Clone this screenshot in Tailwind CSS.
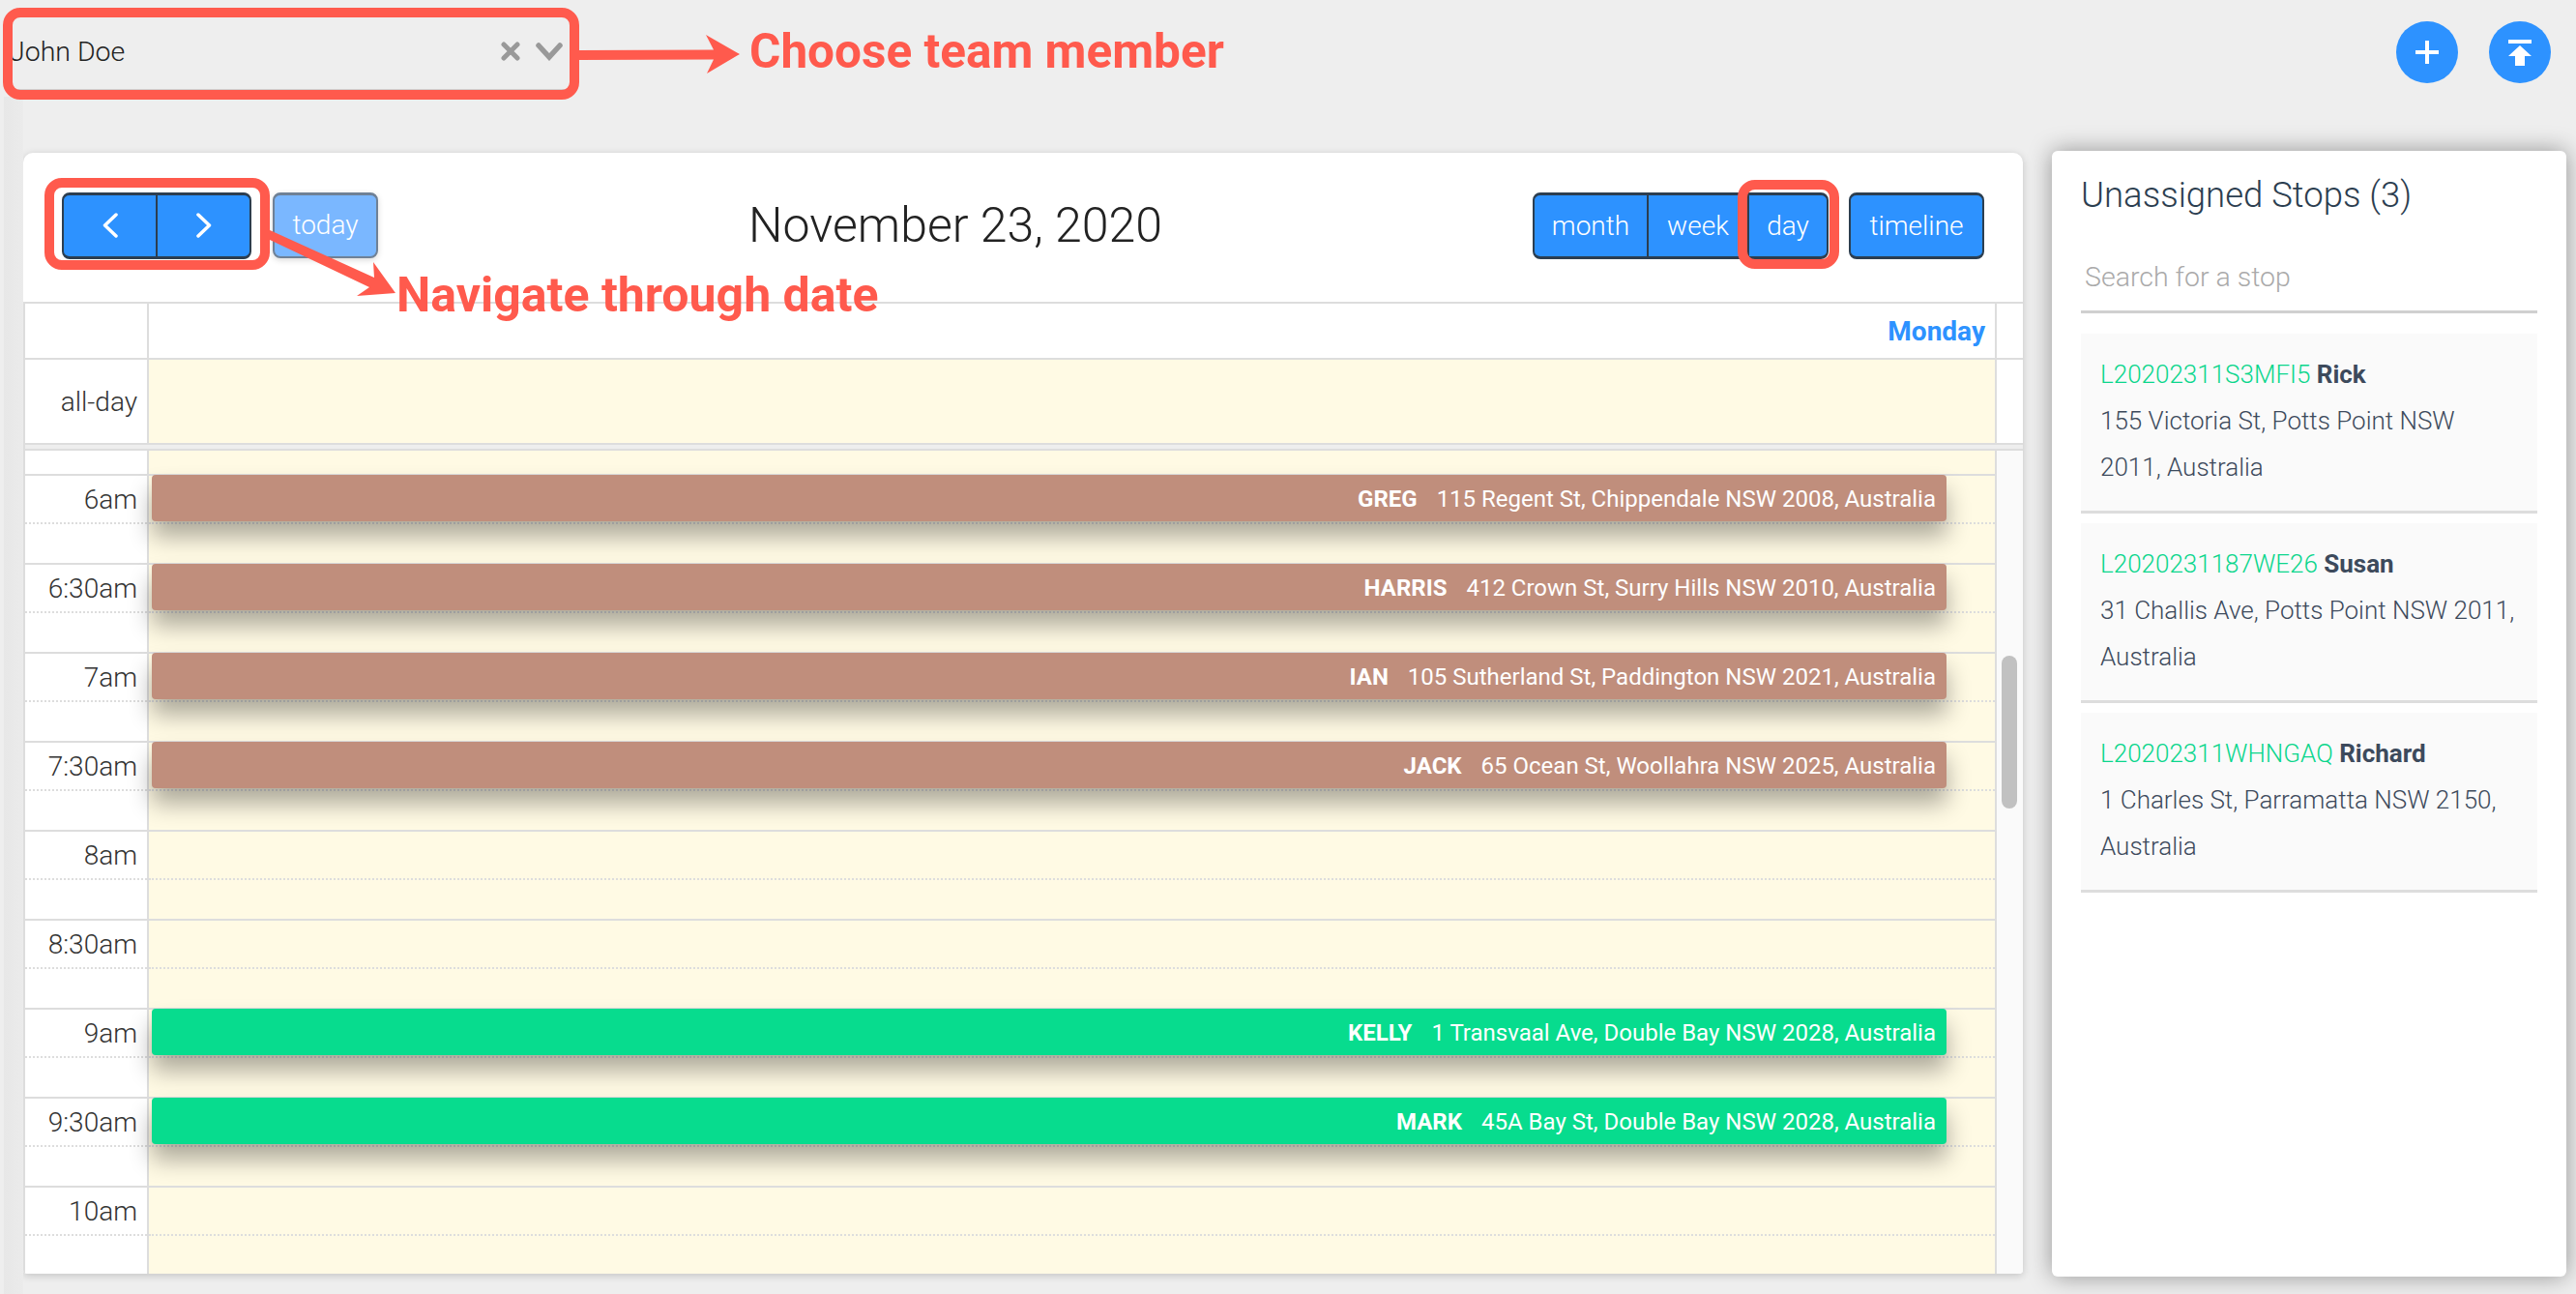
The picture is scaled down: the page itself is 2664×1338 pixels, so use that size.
<!DOCTYPE html>
<html>
<head>
<meta charset="utf-8">
<script src="https://cdn.jsdelivr.net/npm/@tailwindcss/browser@4"></script>
</head>
<body class="bg-[#eeeeee]">
<div class="relative w-[2664px] h-[1338px] overflow-hidden bg-[#eeeeee] font-['Roboto',sans-serif] text-[#333]">

  <!-- faint strip down the left edge -->
  <div class="absolute left-[4px] top-[100px] bottom-0 w-[20px] bg-linear-to-r from-[#e7e7e7] to-[#ebebeb]"></div>

  <!-- top bar -->
  <header class="h-[156px] flex justify-between pt-[14px] pl-[8px] pr-[26px]">
    <div class="w-[583px] h-[80px] border-b-[2px] border-[#d0d0d0] flex items-center justify-between pl-[2px] pr-[9px]">
      <span class="text-[28.5px] pt-[2px] font-light text-[#222] leading-none">John Doe</span>
      <div class="flex items-center gap-[16px]">
        <svg class="w-[20px] h-[20px]" viewBox="0 0 20 20"><path d="M3 3 L17 17 M17 3 L3 17" stroke="#999" stroke-width="5" stroke-linecap="round" fill="none"/></svg>
        <svg class="w-[28px] h-[19px]" viewBox="0 0 28 19"><path d="M3 3 L14 15 L25 3" stroke="#999" stroke-width="5.500" stroke-linecap="round" fill="none"/></svg>
      </div>
    </div>
    <div class="flex gap-[32px] pt-[8px]">
      <button class="w-[64px] h-[64px] rounded-full bg-[#2d92ff] flex items-center justify-center">
        <svg class="w-[24px] h-[24px]" viewBox="0 0 24 24"><path d="M12 0 V24 M0 12 H24" stroke="#fff" stroke-width="4" fill="none"/></svg>
      </button>
      <button class="w-[64px] h-[64px] rounded-full bg-[#2d92ff] flex items-center justify-center">
        <svg class="w-[24px] h-[27px]" viewBox="0 0 24 27"><path d="M0 0 H24 V4 H0 Z M12 6 L24 17 H17 V27 H7 V17 H0 Z" fill="#fff"/></svg>
      </button>
    </div>
  </header>

  <main class="flex items-start pl-[24px] gap-[30px]">
    <!-- calendar -->
    <section class="mt-[2px] w-[2068px] h-[1159px] bg-white rounded-t-[10px] rounded-b-[4px] overflow-hidden flex flex-col shadow-[0_2px_8px_rgba(0,0,0,0.18)]">
      <div class="h-[154px] shrink-0 flex items-center justify-between pl-[40px] pr-[40px] pb-[4px]">
        <div class="flex gap-[22px]">
          <div class="flex w-[196px] h-[69px] rounded-[8px] bg-[#2d92ff] border-[2px] border-t-[3px] border-b-[3px] border-[#2c3e50]">
            <button class="w-[97px] border-r-[2px] border-[#2c3e50] flex items-center justify-center">
              <svg class="w-[16px] h-[26px]" viewBox="0 0 16 26"><path d="M14 2 L2.500 13 L14 24" stroke="#fff" stroke-width="3.500" stroke-linecap="round" stroke-linejoin="round" fill="none"/></svg>
            </button>
            <button class="flex-1 flex items-center justify-center">
              <svg class="w-[16px] h-[26px]" viewBox="0 0 16 26"><path d="M2 2 L13.500 13 L2 24" stroke="#fff" stroke-width="3.500" stroke-linecap="round" stroke-linejoin="round" fill="none"/></svg>
            </button>
          </div>
          <button class="w-[109px] h-[68px] rounded-[8px] bg-[#7ab7ff] border-[2px] border-t-[3px] border-[#6f8196] text-white text-[28px] font-light shadow-[0_2px_6px_rgba(0,0,0,0.15)]">today</button>
        </div>
        <h1 class="text-[50px] font-light text-[#222] leading-none">November 23, 2020</h1>
        <div class="flex gap-[21px]">
          <div class="flex w-[306px] h-[69px] rounded-[8px] bg-[#2d92ff] border-[2px] border-t-[3px] border-b-[3px] border-[#2c3e50] text-white text-[28px] font-light">
            <button class="w-[118px] pt-[2px] border-r-[2px] border-[#2c3e50]">month</button>
            <button class="w-[102px] pt-[2px]">week</button>
            <button class="flex-1 pt-[2px] border-l-[2px] border-[#2c3e50]">day</button>
          </div>
          <button class="w-[140px] h-[69px] pt-[2px] rounded-[8px] bg-[#2d92ff] border-[2px] border-t-[3px] border-b-[3px] border-[#2c3e50] text-white text-[28px] font-light">timeline</button>
        </div>
      </div>

      <div class="flex-1 min-h-0 flex flex-col border-t-[2px] border-l-[2px] border-[#dddddd]">
        <div class="flex h-[58px] shrink-0 border-b-[2px] border-[#dddddd]">
          <div class="w-[128px] border-r-[2px] border-[#dddddd]"></div>
          <div class="w-[1911px] border-r-[2px] border-[#dddddd] flex items-center justify-end pt-[2px] pr-[10px] text-[28px] font-bold text-[#2d92ff]">Monday</div>
        </div>
        <div class="flex h-[88px] shrink-0 border-b-[2px] border-[#dddddd]">
          <div class="w-[128px] border-r-[2px] border-[#dddddd] flex items-center justify-end pt-[2px] pr-[10px] text-[28px] font-light">all-day</div>
          <div class="w-[1911px] border-r-[2px] border-[#dddddd] bg-[#fffae4]"></div>
        </div>
        <div class="h-[4px] shrink-0 bg-[#eeeeee]"></div>
        <div class="flex-1 min-h-0 flex border-t-[2px] border-[#dddddd]">
          <div class="w-[2039px] shrink-0">
            <div class="flex h-[24px]"><div class="w-[128px] border-r-[2px] border-[#dddddd]"></div><div class="w-[1911px] bg-[#fffae4] border-r-[2px] border-[#dddddd]"></div></div>

            <div class="relative h-[92px] border-t-[2px] border-[#dddddd] flex">
              <div class="w-[128px] shrink-0 border-r-[2px] border-[#dddddd]"><div class="h-[50px] border-b-[2px] border-dotted border-[#dddddd] flex items-center justify-end pt-[1px] pr-[10px] text-[28px] font-light">6am</div></div>
              <div class="flex-1 bg-[#fffae4] border-r-[2px] border-[#dddddd]"><div class="h-[50px] border-b-[2px] border-dotted border-[#dddddd]"></div></div>
              <div class="absolute left-[131px] right-[52px] top-[-1px] h-[48px] rounded-[4px] bg-[#c08e7c] text-white shadow-[0_16px_24px_rgba(0,0,0,0.32)] flex items-center justify-end gap-[20px] pt-[2px] pr-[11px] text-[24px]"><b class="font-bold">GREG</b><span>115 Regent St, Chippendale NSW 2008, Australia</span></div>
            </div>
            <div class="relative h-[92px] border-t-[2px] border-[#dddddd] flex">
              <div class="w-[128px] shrink-0 border-r-[2px] border-[#dddddd]"><div class="h-[50px] border-b-[2px] border-dotted border-[#dddddd] flex items-center justify-end pt-[1px] pr-[10px] text-[28px] font-light">6:30am</div></div>
              <div class="flex-1 bg-[#fffae4] border-r-[2px] border-[#dddddd]"><div class="h-[50px] border-b-[2px] border-dotted border-[#dddddd]"></div></div>
              <div class="absolute left-[131px] right-[52px] top-[-1px] h-[48px] rounded-[4px] bg-[#c08e7c] text-white shadow-[0_16px_24px_rgba(0,0,0,0.32)] flex items-center justify-end gap-[20px] pt-[2px] pr-[11px] text-[24px]"><b class="font-bold">HARRIS</b><span>412 Crown St, Surry Hills NSW 2010, Australia</span></div>
            </div>
            <div class="relative h-[92px] border-t-[2px] border-[#dddddd] flex">
              <div class="w-[128px] shrink-0 border-r-[2px] border-[#dddddd]"><div class="h-[50px] border-b-[2px] border-dotted border-[#dddddd] flex items-center justify-end pt-[1px] pr-[10px] text-[28px] font-light">7am</div></div>
              <div class="flex-1 bg-[#fffae4] border-r-[2px] border-[#dddddd]"><div class="h-[50px] border-b-[2px] border-dotted border-[#dddddd]"></div></div>
              <div class="absolute left-[131px] right-[52px] top-[-1px] h-[48px] rounded-[4px] bg-[#c08e7c] text-white shadow-[0_16px_24px_rgba(0,0,0,0.32)] flex items-center justify-end gap-[20px] pt-[2px] pr-[11px] text-[24px]"><b class="font-bold">IAN</b><span>105 Sutherland St, Paddington NSW 2021, Australia</span></div>
            </div>
            <div class="relative h-[92px] border-t-[2px] border-[#dddddd] flex">
              <div class="w-[128px] shrink-0 border-r-[2px] border-[#dddddd]"><div class="h-[50px] border-b-[2px] border-dotted border-[#dddddd] flex items-center justify-end pt-[1px] pr-[10px] text-[28px] font-light">7:30am</div></div>
              <div class="flex-1 bg-[#fffae4] border-r-[2px] border-[#dddddd]"><div class="h-[50px] border-b-[2px] border-dotted border-[#dddddd]"></div></div>
              <div class="absolute left-[131px] right-[52px] top-[-1px] h-[48px] rounded-[4px] bg-[#c08e7c] text-white shadow-[0_16px_24px_rgba(0,0,0,0.32)] flex items-center justify-end gap-[20px] pt-[2px] pr-[11px] text-[24px]"><b class="font-bold">JACK</b><span>65 Ocean St, Woollahra NSW 2025, Australia</span></div>
            </div>
            <div class="relative h-[92px] border-t-[2px] border-[#dddddd] flex">
              <div class="w-[128px] shrink-0 border-r-[2px] border-[#dddddd]"><div class="h-[50px] border-b-[2px] border-dotted border-[#dddddd] flex items-center justify-end pt-[1px] pr-[10px] text-[28px] font-light">8am</div></div>
              <div class="flex-1 bg-[#fffae4] border-r-[2px] border-[#dddddd]"><div class="h-[50px] border-b-[2px] border-dotted border-[#dddddd]"></div></div>
            </div>
            <div class="relative h-[92px] border-t-[2px] border-[#dddddd] flex">
              <div class="w-[128px] shrink-0 border-r-[2px] border-[#dddddd]"><div class="h-[50px] border-b-[2px] border-dotted border-[#dddddd] flex items-center justify-end pt-[1px] pr-[10px] text-[28px] font-light">8:30am</div></div>
              <div class="flex-1 bg-[#fffae4] border-r-[2px] border-[#dddddd]"><div class="h-[50px] border-b-[2px] border-dotted border-[#dddddd]"></div></div>
            </div>
            <div class="relative h-[92px] border-t-[2px] border-[#dddddd] flex">
              <div class="w-[128px] shrink-0 border-r-[2px] border-[#dddddd]"><div class="h-[50px] border-b-[2px] border-dotted border-[#dddddd] flex items-center justify-end pt-[1px] pr-[10px] text-[28px] font-light">9am</div></div>
              <div class="flex-1 bg-[#fffae4] border-r-[2px] border-[#dddddd]"><div class="h-[50px] border-b-[2px] border-dotted border-[#dddddd]"></div></div>
              <div class="absolute left-[131px] right-[52px] top-[-1px] h-[48px] rounded-[4px] bg-[#07dc8e] text-white shadow-[0_16px_24px_rgba(0,0,0,0.32)] flex items-center justify-end gap-[20px] pt-[2px] pr-[11px] text-[24px]"><b class="font-bold">KELLY</b><span>1 Transvaal Ave, Double Bay NSW 2028, Australia</span></div>
            </div>
            <div class="relative h-[92px] border-t-[2px] border-[#dddddd] flex">
              <div class="w-[128px] shrink-0 border-r-[2px] border-[#dddddd]"><div class="h-[50px] border-b-[2px] border-dotted border-[#dddddd] flex items-center justify-end pt-[1px] pr-[10px] text-[28px] font-light">9:30am</div></div>
              <div class="flex-1 bg-[#fffae4] border-r-[2px] border-[#dddddd]"><div class="h-[50px] border-b-[2px] border-dotted border-[#dddddd]"></div></div>
              <div class="absolute left-[131px] right-[52px] top-[-1px] h-[48px] rounded-[4px] bg-[#07dc8e] text-white shadow-[0_16px_24px_rgba(0,0,0,0.32)] flex items-center justify-end gap-[20px] pt-[2px] pr-[11px] text-[24px]"><b class="font-bold">MARK</b><span>45A Bay St, Double Bay NSW 2028, Australia</span></div>
            </div>
            <div class="relative h-[92px] border-t-[2px] border-[#dddddd] flex">
              <div class="w-[128px] shrink-0 border-r-[2px] border-[#dddddd]"><div class="h-[50px] border-b-[2px] border-dotted border-[#dddddd] flex items-center justify-end pt-[1px] pr-[10px] text-[28px] font-light">10am</div></div>
              <div class="flex-1 bg-[#fffae4] border-r-[2px] border-[#dddddd]"><div class="h-[50px] border-b-[2px] border-dotted border-[#dddddd]"></div></div>
            </div>
          </div>
          <div class="flex-1 bg-[#fafafa] pt-[212px] pl-[5px]">
            <div class="w-[16px] h-[158px] rounded-full bg-[#c1c1c1]"></div>
          </div>
        </div>
      </div>
    </section>

    <!-- sidebar -->
    <aside class="w-[532px] h-[1164px] bg-white rounded-[6px] shadow-[0_0_24px_rgba(0,0,0,0.38)] px-[30px]">
      <h2 class="h-[94px] flex items-center pb-[2px] text-[36.500px] font-light text-[#2c3e50]">Unassigned Stops (3)</h2>
      <div class="h-[74px] border-b-[3px] border-[#d0d0d0] flex items-center pl-[4px] pt-[4px] text-[28.500px] font-light text-[#aaaaaa]">Search for a stop</div>
      <ul class="pt-[21px] flex flex-col gap-[10px]">
        <li class="h-[186px] bg-[#fafafa] border-b-[3px] border-[#dddddd] px-[20px] pt-[18px] text-[26px] leading-[48px] font-light text-[#3d4a5c]"><span class="text-[#0bd68c]">L20202311S3MFI5</span> <b class="font-bold">Rick</b><br>155 Victoria St, Potts Point NSW 2011, Australia</li>
        <li class="h-[186px] bg-[#fafafa] border-b-[3px] border-[#dddddd] px-[20px] pt-[18px] text-[26px] leading-[48px] font-light text-[#3d4a5c]"><span class="text-[#0bd68c]">L2020231187WE26</span> <b class="font-bold">Susan</b><br>31 Challis Ave, Potts Point NSW 2011, Australia</li>
        <li class="h-[186px] bg-[#fafafa] border-b-[3px] border-[#dddddd] px-[20px] pt-[18px] text-[26px] leading-[48px] font-light text-[#3d4a5c]"><span class="text-[#0bd68c]">L20202311WHNGAQ</span> <b class="font-bold">Richard</b><br>1 Charles St, Parramatta NSW 2150, Australia</li>
      </ul>
    </aside>
  </main>

  <!-- annotations over the page -->
  <div class="absolute left-[3px] top-[8px] w-[596px] h-[95px] border-[10px] border-[#ff5a4d] rounded-[18px]"></div>
  <div class="absolute left-[46px] top-[184px] w-[233px] h-[95px] border-[10px] border-[#ff5a4d] rounded-[18px]"></div>
  <div class="absolute left-[1797px] top-[186px] w-[105px] h-[92px] border-[10px] border-[#ff5a4d] rounded-[18px]"></div>
  <svg class="absolute left-0 top-0 w-[1000px] h-[340px]" viewBox="0 0 1000 340">
    <path d="M598 52 L738 51.500 L730 36 L765 56 L731 76 L738 61.500 L598 62 Z" fill="#ff5a4d"/>
    <path d="M279 238 L387 287 L386 271 L409 303 L369 306 L382 297 L279 248 Z" fill="#ff5a4d"/>
  </svg>
  <div class="absolute left-[775px] top-[25px] text-[49.500px] leading-[56px] font-bold text-[#ff5a4d]">Choose team member</div>
  <div class="absolute left-[410px] top-[277px] text-[50px] leading-[56px] font-bold text-[#ff5a4d]">Navigate through date</div>
</div>
</body>
</html>
